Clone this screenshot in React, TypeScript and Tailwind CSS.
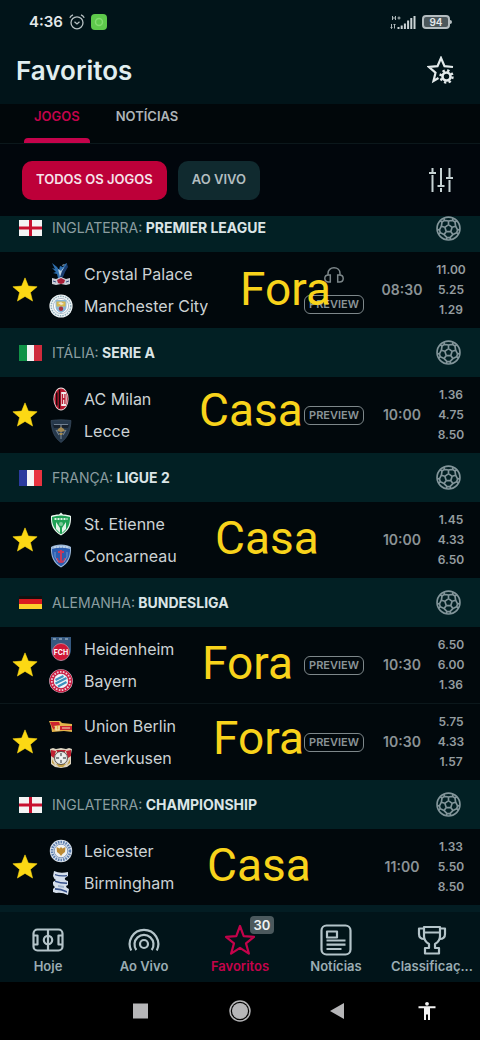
import { useState, type ReactNode } from "react";
import clsx from "clsx";

type Crest =
  | "palace" | "city" | "milan" | "lecce" | "etienne" | "concarneau"
  | "heidenheim" | "bayern" | "union" | "leverkusen" | "leicester" | "birmingham";

type Team = { name: string; crest: Crest };

type Match = {
  home: Team;
  away: Team;
  time: string;
  odds: string[];
  preview?: boolean;
  audio?: boolean;
  note: string;
  noteClass: string;
};

type League = { country: string; name: string; flag: FlagName; matches: Match[] };
type FlagName = "england" | "italy" | "france" | "germany";

const LEAGUES: League[] = [
  {
    country: "INGLATERRA",
    name: "PREMIER LEAGUE",
    flag: "england",
    matches: [
      {
        home: { name: "Crystal Palace", crest: "palace" },
        away: { name: "Manchester City", crest: "city" },
        time: "08:30",
        odds: ["11.00", "5.25", "1.29"],
        preview: true,
        audio: true,
        note: "Fora",
        noteClass: "left-[240px] top-[13px]"
      }
    ]
  },
  {
    country: "ITÁLIA",
    name: "SERIE A",
    flag: "italy",
    matches: [
      {
        home: { name: "AC Milan", crest: "milan" },
        away: { name: "Lecce", crest: "lecce" },
        time: "10:00",
        odds: ["1.36", "4.75", "8.50"],
        preview: true,
        note: "Casa",
        noteClass: "left-[199px] top-[9px]"
      }
    ]
  },
  {
    country: "FRANÇA",
    name: "LIGUE 2",
    flag: "france",
    matches: [
      {
        home: { name: "St. Etienne", crest: "etienne" },
        away: { name: "Concarneau", crest: "concarneau" },
        time: "10:00",
        odds: ["1.45", "4.33", "6.50"],
        note: "Casa",
        noteClass: "left-[215px] top-[12px]"
      }
    ]
  },
  {
    country: "ALEMANHA",
    name: "BUNDESLIGA",
    flag: "germany",
    matches: [
      {
        home: { name: "Heidenheim", crest: "heidenheim" },
        away: { name: "Bayern", crest: "bayern" },
        time: "10:30",
        odds: ["6.50", "6.00", "1.36"],
        preview: true,
        note: "Fora",
        noteClass: "left-[202px] top-[12px]"
      },
      {
        home: { name: "Union Berlin", crest: "union" },
        away: { name: "Leverkusen", crest: "leverkusen" },
        time: "10:30",
        odds: ["5.75", "4.33", "1.57"],
        preview: true,
        note: "Fora",
        noteClass: "left-[213px] top-[10px]"
      }
    ]
  },
  {
    country: "INGLATERRA",
    name: "CHAMPIONSHIP",
    flag: "england",
    matches: [
      {
        home: { name: "Leicester", crest: "leicester" },
        away: { name: "Birmingham", crest: "birmingham" },
        time: "11:00",
        odds: ["1.33", "5.50", "8.50"],
        note: "Casa",
        noteClass: "left-[207px] top-[12px]"
      }
    ]
  }
];

const STAR = "M12 .8l3.1 7.6 8.1.6-6.2 5.2 2 8L12 17.9l-7 4.3 2-8L.8 9l8.1-.6z";

function Flag({ name }: { name: FlagName }) {
  return (
    <svg width="23" height="16" viewBox="0 0 23 16" className="shrink-0" aria-hidden="true">
      {name === "england" && (
        <>
          <path fill="#f4f4f4" d="M0 0h23v16H0z" />
          <path fill="#c8102e" d="M10 0h3v16h-3zM0 6.5h23v3H0z" />
        </>
      )}
      {name === "italy" && (
        <>
          <path fill="#119247" d="M0 0h8v16H0z" />
          <path fill="#f4f4f4" d="M8 0h7v16H8z" />
          <path fill="#ce2b3c" d="M15 0h8v16h-8z" />
        </>
      )}
      {name === "france" && (
        <>
          <path fill="#2b3b9e" d="M0 0h8v16H0z" />
          <path fill="#f4f4f4" d="M8 0h7v16H8z" />
          <path fill="#e8333f" d="M15 0h8v16h-8z" />
        </>
      )}
      {name === "germany" && (
        <>
          <path fill="#111" d="M0 1h23v4H0z" />
          <path fill="#d91a20" d="M0 4h23v5H0z" />
          <path fill="#fbcf2b" d="M0 9h23v5H0z" />
        </>
      )}
    </svg>
  );
}

const CRESTS: Record<Crest, ReactNode> = {
  palace: (
    <>
      <path fill="#2f6fae" d="M3 1l5 4 2 3 1-4 3 1 2-3 2-1-1 6-3 5-1 4-4 0-1-4-4-1 3-1-4-4 3 1z" />
      <path fill="#b9cfe0" d="M9 7l3 2 3-4-2 7-2 3-1-4zM13 3l3-1-2 2z" />
      <path fill="#1a3c6e" d="M13 9l5-7 1 3-3 5-2 5h-3z" />
      <path fill="#c9cdd6" d="M3 16l4 1 5-2 5 2 4-1v6l-4 1-5-1-5 1-4-1z" />
      <path fill="#a81e38" d="M8 18l4-2 4 2-1 3-3 1-3-1z" />
      <path stroke="#354a7c" strokeWidth="1" d="M4 19l3 1m10 0l3-1" />
    </>
  ),
  city: (
    <>
      <circle cx="12" cy="12" r="11.6" fill="#eef4f6" />
      <circle cx="12" cy="12" r="9.8" fill="none" stroke="#90aeba" strokeWidth="1.4" strokeDasharray="1.5 1" />
      <circle cx="12" cy="12" r="7.6" fill="#fff" stroke="#8195a8" strokeWidth=".6" />
      <path fill="#8bb8d8" d="M6.500 6h11v7c0 3-2.500 5-5.500 6-3-1-5.500-3-5.500-6z" />
      <path fill="#d6b951" d="M7.500 7.500h9v5h-9z" />
      <path fill="#efe6cf" d="M9 9l3-1 3 2-3 1z" />
      <circle cx="12" cy="14.800" r="2.200" fill="#a63240" />
    </>
  ),
  milan: (
    <>
      <ellipse cx="12" cy="12" rx="7.600" ry="11.400" fill="#eadede" />
      <ellipse cx="12" cy="12" rx="6.800" ry="10.600" fill="#b7182f" />
      <path fill="#18090c" d="M7 5.500h1.500v13H7zM9.800 2.500h1.400v19H9.800z" />
      <path fill="#f2eded" d="M12.200 5h4.600c1.300 4 1.300 10 0 14h-4.600z" />
      <path fill="#b7182f" d="M12.800 7h1.300v10h-1.300zM15.300 7h1.300v10h-1.300zM13.500 11h2.500v1.800h-2.500z" />
    </>
  ),
  lecce: (
    <>
      <path fill="#26384b" stroke="#435669" strokeWidth=".6" d="M2 1.500c7-1 13-1 20 0-.5 10-3 17-10 22C5 18.500 2.500 11.500 2 1.500z" />
      <path fill="#17212d" d="M4 6h16l-1 3H5z" />
      <path stroke="#718091" strokeWidth="1.200" fill="none" d="M5 5.500h14M12 6v14M7 11l3 5m7-5l-3 5" />
      <path fill="#a58b52" d="M9 10l3-2 3 2 1 2-4 1-4-1zM10 14h4l-1 2h-2z" />
    </>
  ),
  etienne: (
    <>
      <path fill="#e9f6ee" d="M12 .5l2 2c3 0 6 .5 8 1.500.5 9-2 15-10 19.500C4 19 1.500 13 2 4c2-1 5-1.500 8-1.500z" />
      <path fill="#1fa055" d="M3 5c6-2 12-2 18 0 .2 8-2.500 13-9 17.300C5.500 18 2.800 13 3 5z" />
      <path stroke="#d9f0e1" strokeWidth="1.800" strokeDasharray="2 1" d="M5.500 7h13" />
      <path fill="#e2f3e8" d="M7 10l4 6v5l-4-4zM17 10l-4 6v5l4-4z" />
      <circle cx="12" cy="12" r="2" fill="#7bc898" />
    </>
  ),
  concarneau: (
    <>
      <path fill="#9eb9d9" d="M12 .5c4 0 8 1 10 2.500.5 9-2 16-10 20.500C4 19 1.500 12 2 3 4 1.500 8 .5 12 .5z" />
      <path fill="#2b5db0" d="M3 5c6-2 12-2 18 0 .2 8-2.500 13-9 17.300C5.500 18 2.800 13 3 5z" />
      <path stroke="#d7e4f2" strokeWidth="1" strokeDasharray="2 1" d="M5 3h14" />
      <path stroke="#c5395c" strokeWidth="2" fill="none" d="M12 6v13M9 8h6M8 14c0 3 2 4 4 4s4-1 4-4" />
      <path stroke="#6c95d0" fill="none" d="M6 8v5l3 5M18 8v5l-3 5" />
    </>
  ),
  heidenheim: (
    <>
      <path fill="#35587f" d="M2 0h20v13c0 5-4 9-10 11C6 22 2 18 2 13z" />
      <path fill="#7892ab" d="M4 1h3v2H4zM10 1h3v2h-3zM16 1h3v2h-3z" />
      <circle cx="12" cy="15" r="8.500" fill="#cf1836" stroke="#dfa6b1" strokeWidth=".6" />
      <text x="12" y="17.500" textAnchor="middle" fill="#fff" fontSize="7" fontWeight="700" fontFamily="Inter, sans-serif">FCH</text>
    </>
  ),
  bayern: (
    <>
      <circle cx="12" cy="12" r="11.800" fill="#d8dbe6" />
      <circle cx="12" cy="12" r="9.300" fill="none" stroke="#c91f44" strokeWidth="4.200" />
      <circle cx="12" cy="12" r="9.200" fill="none" stroke="#f1cbd5" strokeWidth="1.800" strokeDasharray="1.600 1.400" />
      <circle cx="12" cy="12" r="6.800" fill="#eef4f8" />
      <path stroke="#3c91bd" strokeWidth="2.200" d="M6.500 11l8-4M6.500 14.500l11-5.500M9 17.500l8.500-4.500" />
    </>
  ),
  union: (
    <>
      <path fill="#e4b44c" d="M0 7h11l2 2 10 1v8l-8-1-12 1-1-6z" />
      <path fill="#cb2430" d="M1 8h9l1 3-7 1 2 1-1 3-2-3zM11 12h12v4H11z" />
      <path stroke="#f4e5bd" strokeWidth="1.200" fill="none" d="M7 12v4h3v-4M13 14h8" />
    </>
  ),
  leverkusen: (
    <>
      <path fill="#ddd4c1" d="M1 3l3-1 3 1 5-1 5 1 3-1 3 1-1 5v10l-4 3-6 1-6-1-4-3V8z" />
      <path fill="#bf2132" d="M2 4l5 1-2 7-3-2zM22 4l-5 1 2 7 3-2zM7 4h10l-2 3H9z" />
      <path fill="#c4a24b" d="M3 13l3 6-3-2zM21 13l-3 6 3-2zM7 18h10l-3 3h-4z" />
      <circle cx="12" cy="12" r="6.500" fill="#e9ebe9" stroke="#3b3333" strokeWidth=".8" />
      <path stroke="#606568" strokeWidth="1.400" d="M12 7v10M7 12h10" />
      <circle cx="12" cy="12" r="2" fill="#f6f6f6" />
    </>
  ),
  leicester: (
    <>
      <circle cx="12" cy="12" r="11.200" fill="#dce4ee" />
      <circle cx="12" cy="12" r="9" fill="none" stroke="#5d7fae" strokeWidth="2.600" strokeDasharray="1.600 1" />
      <circle cx="12" cy="12" r="6.800" fill="#f0f1ef" stroke="#5578ad" strokeWidth=".7" />
      <path fill="#bd8b35" d="M7.500 8l3 1.500L12 8l1.500 1.500 3-1.500-.5 5-2.500 2-1.500 2-1.500-2L8 13z" />
    </>
  ),
  birmingham: (
    <>
      <path fill="#d5dfec" d="M5 0q6 3 14 1v4l-3 2q-1 2 3 3v4l-2 1q0 2 3 3l-1 6q-6-3-12-2l-3-1v-3l2-2q-2-1-2-3v-2l3-2q-2-1-3-4z" />
      <path fill="#35508b" d="M6 3q5 2 12 1v1.300Q11 6 6 4.300zM6 9.500q5 2 12 2v1.400q-7 0-12-2zM6 17q6 0 12 3v1.800q-6-3-12-3z" />
      <path fill="#9fb3cd" d="M9 14l6 1v2l-6-1z" />
    </>
  )
};

function polar(r: number, deg: number) {
  const a = ((deg - 90) * Math.PI) / 180;
  return `${(12 + r * Math.cos(a)).toFixed(2)} ${(12 + r * Math.sin(a)).toFixed(2)}`;
}

// Centre pentagon, its spokes, and the cut-off panels along the rim
const BALL_SEAMS = [0, 72, 144, 216, 288]
  .map(
    (d) =>
      `M${polar(3.7, d)}L${polar(3.7, d + 72)}M${polar(3.7, d)}L${polar(7.2, d)}` +
      `M${polar(11, d - 24)}L${polar(8.8, d - 27)}L${polar(7.2, d)}L${polar(8.8, d + 27)}L${polar(11, d + 24)}` +
      `M${polar(8.8, d + 27)}L${polar(8.8, d + 45)}`
  )
  .join("");

function BallIcon() {
  return (
    <svg width="25" height="25" viewBox="0 0 24 24" fill="none" stroke="#82959a" strokeWidth="1.600" strokeLinejoin="round" aria-hidden="true">
      <circle cx="12" cy="12" r="11" />
      <path d={BALL_SEAMS} />
    </svg>
  );
}

function StatusBar() {
  return (
    <div className="flex h-11 items-center justify-between pl-[29px] pr-7 text-[#e3e9ea]">
      <div className="flex items-center gap-1.5">
        <span className="text-[15px] font-semibold">4:36</span>
        <svg width="16" height="16" viewBox="0 0 16 16" fill="none" stroke="#b7c1c3" strokeWidth="1.300" aria-hidden="true">
          <circle cx="8" cy="8.800" r="6" />
          <path d="M.8 3.800Q1.800 1.800 4 .9M15.200 3.800Q14.200 1.800 12 .9M5.500 7.800L8 10l2.500-2.200" />
        </svg>
        <svg width="16" height="16" viewBox="0 0 16 16" aria-hidden="true">
          <rect width="16" height="16" rx="4" fill="#5ec94c" />
          <circle cx="8" cy="8" r="3.500" fill="none" stroke="#83dc70" strokeWidth="1.500" />
        </svg>
      </div>
      <div className="flex items-center gap-1.5">
        <svg width="26" height="15" viewBox="0 0 26 15" fill="#cbd3d5" aria-hidden="true">
          <path d="M7.500 12h2v2h-2zM10.700 10.500h2V14h-2zM13.900 8.500h2V14h-2zM17.100 5.500h2V14h-2zM20.300 3h2v11h-2zM23.500 1h2v13h-2z" />
          <path fill="none" stroke="#aeb8ba" strokeWidth="1" d="M2.500 1v4M5.500 1v4M2.500 3h3M7.500 3h3M9 1.500v3M1.500 9v4.500M.5 12.500l1 1 1-1M4.500 13.500V9m-1 1l1-1 1 1" />
        </svg>
        <div className="flex items-center">
          <span className="flex h-[14px] w-7 items-center justify-center rounded border-2 border-[#b4bdc0] bg-[#4b575b] text-[10px] font-semibold leading-none">
            94
          </span>
          <span className="h-1 w-0.5 rounded-r bg-[#b4bdc0]" />
        </div>
      </div>
    </div>
  );
}

function MatchRow({ match }: { match: Match }) {
  const [starred, setStarred] = useState(true);

  return (
    <li className="relative box-content flex h-[76px] items-center bg-[#01080c]">
      <button
        aria-label="Favorito"
        aria-pressed={starred}
        onClick={() => setStarred(!starred)}
        className="flex w-[49px] shrink-0 items-center justify-center self-stretch"
      >
        <svg width="26" height="26" viewBox="0 0 24 24" fill={starred ? "#fcd814" : "none"} stroke="#fcd814" strokeWidth=".5" aria-hidden="true">
          <path d={STAR} />
        </svg>
      </button>
      <div className="min-w-0 flex-1">
        {[match.home, match.away].map((team) => (
          <div key={team.name} className="flex h-8 items-center gap-[11px]">
            <svg width="24" height="24" viewBox="0 0 24 24" fill="none" className="shrink-0" aria-hidden="true">
              {CRESTS[team.crest]}
            </svg>
            <span className="truncate text-base text-[#ccd2d4]">{team.name}</span>
          </div>
        ))}
      </div>
      <div className="mr-3 flex flex-col items-center gap-3">
        {match.audio && (
          <svg width="20" height="16" viewBox="0 0 20 16" fill="none" stroke="#7c8689" strokeWidth="1.500" aria-hidden="true">
            <path d="M4 8V6.500C4 3 6.500.8 10 .8S16 3 16 6.500V8M6.300 8v7H4.500C2.300 15 .8 13.500.8 11.500S2.300 8 4.500 8zM13.700 8v7h1.800c2.200 0 3.700-1.500 3.700-3.500S17.700 8 15.500 8z" />
          </svg>
        )}
        {match.preview && (
          <a href="#preview" className="flex h-[19px] w-[60px] items-center justify-center rounded-md border border-[#7d878a] text-[11px] font-semibold text-[#8b9497]">
            PREVIEW
          </a>
        )}
      </div>
      <time className="w-[52px] text-center text-sm font-semibold text-[#8b9396]">{match.time}</time>
      <div className="mr-1.5 w-[46px] text-center text-xs font-semibold leading-5 text-[#959da0]">
        {match.odds.map((odd) => (
          <p key={odd}>{odd}</p>
        ))}
      </div>
      <span className={clsx("pointer-events-none absolute font-[Roboto,sans-serif] text-[46px] leading-12 text-[#f8d31b]", match.noteClass)}>
        {match.note}
      </span>
    </li>
  );
}

function LeagueSection({ league, clipped }: { league: League; clipped: boolean }) {
  return (
    <section>
      <div className={clsx("flex items-center bg-[#022024] px-[19px]", clipped ? "h-9 pb-3" : "h-[49px]")}>
        <Flag name={league.flag} />
        <h2 className="ml-2.5 flex-1 text-sm font-bold text-[#dbe5e6]">
          <span className="font-normal text-[#8b9da0]">{league.country}:</span> {league.name}
        </h2>
        <BallIcon />
      </div>
      <ul className="divide-y divide-[#0b171b]">
        {league.matches.map((match) => (
          <MatchRow key={match.home.name} match={match} />
        ))}
      </ul>
    </section>
  );
}

const NAV_ITEMS = [
  {
    label: "Hoje",
    icon: (
      <>
        <rect x="1.500" y="5.500" width="29" height="21" rx="4" />
        <path d="M16 5.500v21M1.500 11.500h4v9h-4M30.500 11.500h-4v9h4" />
        <circle cx="16" cy="16" r="4.200" />
      </>
    )
  },
  {
    label: "Ao Vivo",
    icon: (
      <>
        <circle cx="16" cy="20" r="4" />
        <path d="M8.300 26a9.500 9.500 0 1 1 15.400 0" />
        <path d="M3.200 26.500a14.300 14.300 0 1 1 25.600 0" />
      </>
    )
  },
  {
    label: "Favoritos",
    badge: "30",
    icon: <path d="M16 2l3.700 10.200 10.300.7-8 6.500 2.900 10.200L16 23.800l-8.900 5.800L10 19.400l-8-6.500 10.300-.7z" />
  },
  {
    label: "Notícias",
    icon: (
      <>
        <rect x="1.500" y="1.500" width="29" height="29" rx="5" />
        <path d="M7 7.500h10v6H7zM6.500 16.500h19M6.500 20.700h19M6.500 25h15" />
      </>
    )
  },
  {
    label: "Classificaç...",
    icon: (
      <>
        <path d="M8 3h16v9c0 4-1.500 6-5 8v4h4v5.500H9V24h4v-4c-3.500-2-5-4-5-8zM8 8.500h16" />
        <path d="M8 4.500H3V10c0 3 2 5 5.500 5M24 4.500h5V10c0 3-2 5-5.500 5" />
      </>
    )
  }
];

function BottomNav() {
  const [active, setActive] = useState("Favoritos");

  return (
    <nav className="grid h-[70px] grid-cols-5 bg-[#011419]">
      {NAV_ITEMS.map((item) => (
        <button
          key={item.label}
          onClick={() => setActive(item.label)}
          className={clsx(
            "flex flex-col items-center gap-0.5 pt-3 text-[13px] font-semibold leading-4",
            item.label === active ? "text-[#c4034b]" : "text-[#9badb3]"
          )}
        >
          <span className="relative">
            <svg
              width="32"
              height="32"
              viewBox="0 0 32 32"
              fill="none"
              stroke={item.label === active ? "#c4034b" : "#b4c4c9"}
              strokeWidth="2.200"
              strokeLinejoin="round"
              aria-hidden="true"
            >
              {item.icon}
            </svg>
            {item.badge && (
              <span className="absolute -top-2 left-[26px] flex h-[18px] w-6 items-center justify-center rounded bg-[#4b595d] text-[13px] text-[#edf1f2]">
                {item.badge}
              </span>
            )}
          </span>
          <span>{item.label}</span>
        </button>
      ))}
    </nav>
  );
}

function SystemBar() {
  return (
    <div className="flex h-[58px] items-center justify-between bg-black pl-[128px] pr-[43px]">
      <button aria-label="Recentes">
        <svg width="24" height="24" viewBox="0 0 24 24" aria-hidden="true">
          <path fill="#b6b6b8" d="M5 4.500h15v15H5z" />
        </svg>
      </button>
      <button aria-label="Início">
        <svg width="28" height="24" viewBox="0 0 28 24" aria-hidden="true">
          <circle cx="17" cy="12" r="10" fill="none" stroke="#b6b6b8" strokeWidth="1.500" />
          <circle cx="17" cy="12" r="8" fill="#b6b6b8" />
        </svg>
      </button>
      <button aria-label="Voltar">
        <svg width="24" height="24" viewBox="0 0 24 24" aria-hidden="true">
          <path fill="#b6b6b8" d="M22 4v16L8 12z" />
        </svg>
      </button>
      <button aria-label="Acessibilidade">
        <svg width="20" height="20" viewBox="0 0 20 20" fill="#f3f3f3" aria-hidden="true">
          <circle cx="10" cy="2.800" r="1.900" />
          <path d="M1.500 5.200h17v2.100H13V19h-2v-5.500H9V19H7V7.300H1.500z" />
        </svg>
      </button>
    </div>
  );
}

export default function App() {
  const [tab, setTab] = useState("JOGOS");
  const [filter, setFilter] = useState("TODOS OS JOGOS");

  return (
    <div className="flex min-h-screen flex-col bg-[#031d23] font-[Inter,sans-serif]">
      <header className="h-[104px] bg-[#011419]">
        <StatusBar />
        <div className="flex h-[52px] items-center justify-between pl-4 pr-[25px]">
          <h1 className="text-[26px] font-semibold text-[#e1eeef]">Favoritos</h1>
          <button aria-label="Configurar favoritos">
            <svg width="28" height="28" viewBox="0 0 28 28" fill="none" stroke="#e3eaeb" strokeWidth="2.200" aria-hidden="true">
              <path d="M26 11l-8.500-.8L14 2l-3.500 8.200L2 11l6.500 5.700L6.500 25l5-3" />
              <circle cx="19.500" cy="20.500" r="4" strokeWidth="2.600" />
              <circle cx="19.500" cy="20.500" r="6" strokeWidth="2.400" strokeDasharray="2.350 2.350" />
            </svg>
          </button>
        </div>
      </header>

      <div role="tablist" className="flex h-10 gap-4 border-b border-[#0b171b] bg-[#01070a] pl-6">
        {["JOGOS", "NOTÍCIAS"].map((name) => (
          <button
            key={name}
            role="tab"
            aria-selected={tab === name}
            onClick={() => setTab(name)}
            className={clsx("flex flex-col justify-between px-2.5 pt-1 text-[13px] font-semibold leading-4", tab === name ? "text-[#c4034b]" : "text-[#aeb5b8]")}
          >
            <span>{name}</span>
            {tab === name && <span className="-mx-2.5 h-[5px] self-stretch rounded-t bg-[#c4034b]" />}
          </button>
        ))}
      </div>

      <div className="flex h-[72px] items-center gap-[11px] bg-[#01060c] pl-[22px] pr-[26px]">
        {["TODOS OS JOGOS", "AO VIVO"].map((name) => (
          <button
            key={name}
            aria-pressed={filter === name}
            onClick={() => setFilter(name)}
            className={clsx(
              "h-[39px] rounded-[10px] px-3.5 text-[13px] font-semibold",
              filter === name ? "bg-[#bd0039] text-[#f6e4ea]" : "bg-[#102a2f] text-[#b3bec0]"
            )}
          >
            {name}
          </button>
        ))}
        <button aria-label="Filtros" className="ml-auto">
          <svg width="26" height="26" viewBox="0 0 26 26" fill="none" stroke="#c6d2d3" strokeWidth="2" aria-hidden="true">
            <path d="M4.500 1v4M1 6h7M4.500 8v17M13 1v17M9.500 19h7M13 21v4M21.500 1v9M18 11h7M21.500 13v12" />
          </svg>
        </button>
      </div>

      <main>
        {LEAGUES.map((league, idx) => (
          <LeagueSection key={league.name} league={league} clipped={idx === 0} />
        ))}
      </main>

      <div className="mt-auto">
        <BottomNav />
        <SystemBar />
      </div>
    </div>
  );
}
